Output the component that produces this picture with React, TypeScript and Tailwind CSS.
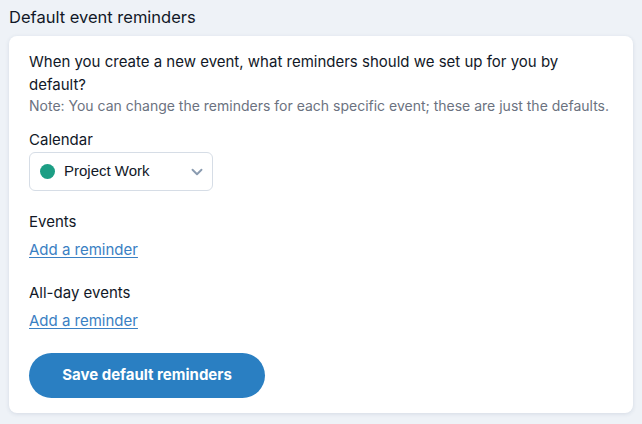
import { ChevronDown } from "lucide-react";

function Section({ label, children }: { label: string; children: React.ReactNode }) {
  return (
    <div>
      <p className="text-[15px] leading-[22px] text-[#111827]">{label}</p>
      {children}
    </div>
  );
}

function AddReminder() {
  return (
    <a href="#" className="mt-[6px] block w-fit text-[15px] leading-[22px] text-[#3a80c3] underline underline-offset-2">
      Add a reminder
    </a>
  );
}

export default function App() {
  return (
    <div className="min-h-[424px] bg-[#eef2f7] px-[9px] pb-3 font-['Inter',sans-serif]">
      <h2 className="py-[6px] text-[16.5px] leading-[23px] text-[#111827]">Default event reminders</h2>

      <div className="mt-px rounded-lg bg-white px-5 pt-[14px] pb-[15px] shadow-[0_1px_4px_rgba(30,60,100,0.12)]">
        <p className="text-[15px] leading-[23px] text-[#111827]">
          When you create a new event, what reminders should we set up for you by default?
        </p>
        <p className="text-[14px] leading-[19px] text-[#6b7280]">
          Note: You can change the reminders for each specific event; these are just the defaults.
        </p>

        <div className="mt-[14px]">
          <Section label="Calendar">
            <button
              type="button"
              className="mt-px flex h-[39px] w-[184px] items-center rounded-md border border-[#d6dde6] bg-white pl-[10px] pr-[6px]"
            >
              <span className="h-[15px] w-[15px] rounded-full bg-[#1c9e84]" />
              <span className="ml-[9px] flex-1 text-left font-['Liberation_Sans',Arial,sans-serif] text-[15px] text-[#111827]">
                Project Work
              </span>
              <ChevronDown className="h-[18px] w-[18px] text-[#8a9bb0]" strokeWidth={2.5} />
            </button>
          </Section>
        </div>

        <div className="mt-5">
          <Section label="Events">
            <AddReminder />
          </Section>
        </div>

        <div className="mt-[21px]">
          <Section label="All-day events">
            <AddReminder />
          </Section>
        </div>

        <button
          type="button"
          className="mt-[21px] h-[45px] w-[236px] rounded-full bg-[#2a7fc2] text-[15px] font-bold text-white"
        >
          Save default reminders
        </button>
      </div>
    </div>
  );
}
